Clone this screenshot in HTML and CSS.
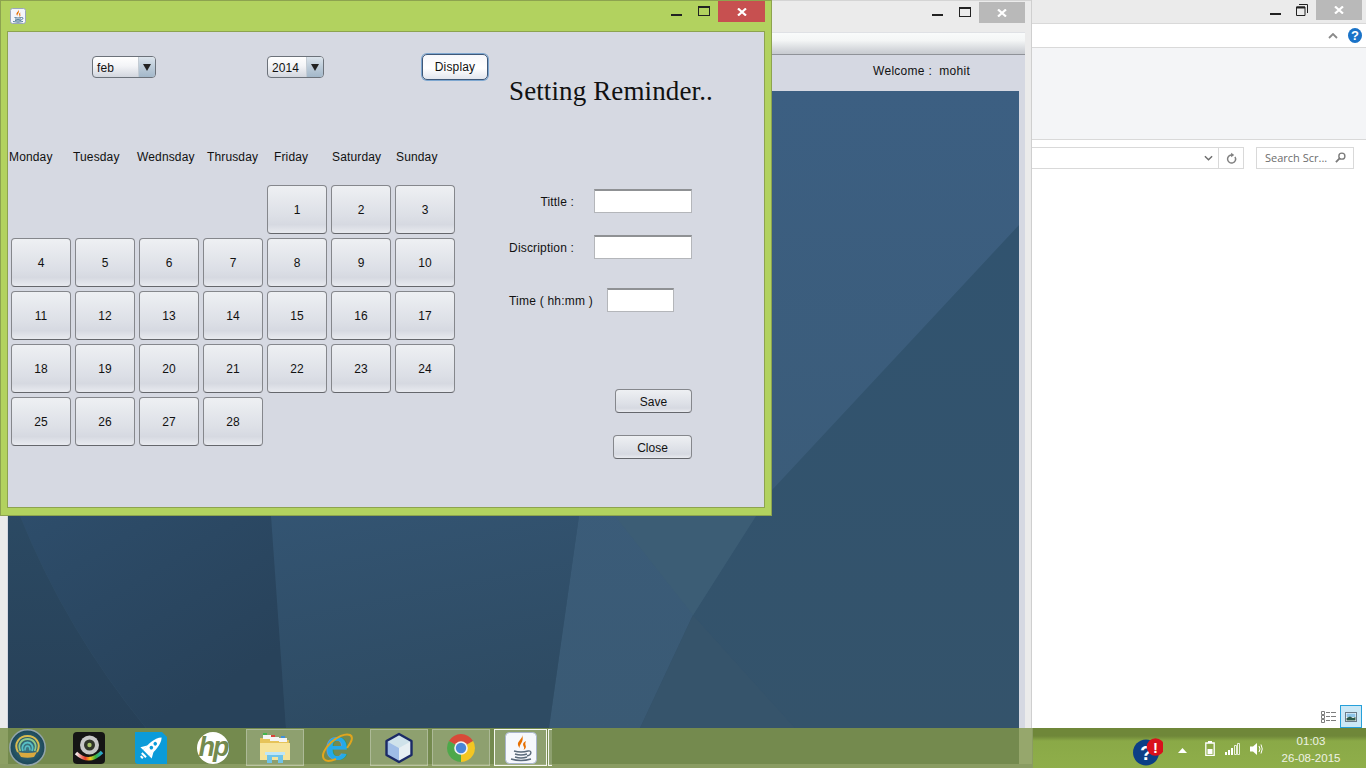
FILE: index.html
```html
<!DOCTYPE html>
<html lang="en">
<head>
<meta charset="utf-8">
<title>Setting Reminder</title>
<link rel="stylesheet" href="styles.css">
</head>
<body>
<div class="screen">
  <main class="stage">
    <section class="win-explorer">
      <div class="ex-title">
        <span class="ctl-min"></span>
        <svg class="ex-restore" viewBox="0 0 12 12"><path d="M3 .5h8.500v8.500M.5 3h8.500v8.500H.5z" fill="none" stroke="#222"/><path d="M.5 3.500H9" stroke="#222" stroke-width="2"/></svg>
        <span class="ctl-close gray ex-close"><svg class="x" viewBox="0 0 10 8"><path d="M1 .5l8 7M9 .5l-8 7" stroke="#fff" stroke-width="2.2"/></svg></span>
      </div>
      <div class="ex-tabs">
        <svg class="ex-chev" viewBox="0 0 10 6"><path d="M1 5l4-4 4 4" fill="none" stroke="#8a8a8a" stroke-width="1.8"/></svg>
        <span class="ex-help">?</span>
      </div>
      <div class="ex-ribbon"></div>
      <div class="ex-nav">
        <div class="ex-addr">
          <svg class="ex-down" viewBox="0 0 10 6"><path d="M1 1l4 4 4-4" fill="none" stroke="#6d6d6d" stroke-width="1.6"/></svg>
          <span class="ex-refresh"><svg viewBox="0 0 12 14"><path d="M9.800 5.200a4.400 4.400 0 1 1-2.600-1.900" fill="none" stroke="#808080" stroke-width="1.6"/><path d="M5.600 .6l3.400 2.600-3.400 2.400z" fill="#808080"/></svg></span>
        </div>
        <div class="ex-search">
          <span>Search Scr...</span>
          <svg viewBox="0 0 12 12"><circle cx="7.500" cy="4.500" r="3.300" fill="none" stroke="#7a7a7a" stroke-width="1.5"/><path d="M5 7l-4 4" stroke="#7a7a7a" stroke-width="2"/></svg>
        </div>
      </div>
      <div class="ex-foot">
        <svg class="ex-details" viewBox="0 0 15 12"><path d="M.5.5h3v3h-3zM.5 4.500h3v3h-3zM.5 8.500h3v3h-3z" fill="#fff" stroke="#7d7d7d"/><path d="M5 1.500h4M10 1.500h5M5 5.500h4M10 5.500h5M5 9.500h4M10 9.500h5" stroke="#7d7d7d"/></svg>
        <span class="ex-large"><svg viewBox="0 0 12 10"><rect x=".5" y=".5" width="11" height="9" fill="#fff" stroke="#6a7a88"/><rect x="1.500" y="1.500" width="9" height="3.500" fill="#8ec5e8"/><path d="M1.500 8.500V6L5 4.500 8 6l2.500-1v3.500z" fill="#2c5a4a"/></svg></span>
      </div>
    </section>

    <section class="win-mid">
      <div class="mid-title">
        <span class="ctl-min"></span>
        <span class="ctl-max"></span>
        <span class="ctl-close gray"><svg class="x" viewBox="0 0 10 8"><path d="M1 .5l8 7M9 .5l-8 7" stroke="#fff" stroke-width="2.2"/></svg></span>
      </div>
      <div class="mid-inner">
        <div class="mid-toolbar"></div>
        <div class="mid-welcome">Welcome :&nbsp; mohit</div>
        <svg class="scene" viewBox="8 91 1011 637" preserveAspectRatio="none">
          <defs>
            <linearGradient id="gTop" x1="0" y1="0" x2="0" y2="1"><stop offset="0" stop-color="#3c5f82"/><stop offset="1" stop-color="#3a5a74"/></linearGradient>
            <linearGradient id="gRight" x1="0" y1="0" x2="0" y2="1"><stop offset="0" stop-color="#305370"/><stop offset="1" stop-color="#34536b"/></linearGradient>
            <linearGradient id="gA" x1="0" y1="0" x2=".5" y2="1"><stop offset="0" stop-color="#305272"/><stop offset="1" stop-color="#28425a"/></linearGradient>
            <linearGradient id="gB" x1="0" y1="0" x2=".2" y2="1"><stop offset="0" stop-color="#36597a"/><stop offset="1" stop-color="#2e4b63"/></linearGradient>
            <linearGradient id="gL" x1="0" y1="0" x2="0" y2="1"><stop offset="0" stop-color="#2c4b65"/><stop offset="1" stop-color="#274057"/></linearGradient>
          </defs>
          <rect x="8" y="91" width="1011" height="637" fill="url(#gRight)"/>
          <path d="M560 91H1019V225L772 490 693 615 640 728H549L579 516Z" fill="url(#gTop)"/>
          <path d="M693 615L795 728H640Z" fill="#36546b"/>
          <path d="M615 516H756L693 615Z" fill="#3c5d75"/>
          <path d="M260 400L271 516 286 728H549L579 516 590 400Z" fill="url(#gB)"/>
          <path d="M8 400H260L271 516 286 728H146Q66 630 20 516Z" fill="url(#gA)"/>
          <path d="M8 480L20 516Q66 630 146 728H8Z" fill="url(#gL)"/>
        </svg>
      </div>
    </section>

    <section class="win-java">
      <header class="java-title">
        <svg class="java-icon" viewBox="0 0 32 32">
          <rect x="1" y="1" width="30" height="30" rx="4" fill="#f4f6fb" stroke="#9aa6bd" stroke-width="2"/>
          <path d="M17 3c1 4-5 6-4 10 .4 1.500 1.500 2.500 2 3-2-3 5-6 2-13z" fill="#e76f00"/>
          <path d="M21 9c-4 2-3 4-2 6 .4 1 0 2-.5 3 2-1 3-3 2-5-.5-1 0-3 .5-4z" fill="#e76f00"/>
          <path d="M9 19q7 2 14 0M10 22q6 2 12 0M10 25q6 2 12 0M23 19c4-1 4 4-1 5M6 27q10 3 20 0" fill="none" stroke="#42708f" stroke-width="1.800"/>
        </svg>
        <span class="ctl-min"></span>
        <span class="ctl-max"></span>
        <span class="ctl-close red"><svg class="x" viewBox="0 0 10 8"><path d="M1 .5l8 7M9 .5l-8 7" stroke="#fff" stroke-width="2.2"/></svg></span>
      </header>
      <div class="java-panel">
        <div class="cal-col">
          <div class="controls">
            <div class="combo combo-month"><span class="combo-text">feb</span><span class="combo-arrow"></span></div>
            <div class="combo combo-year"><span class="combo-text">2014</span><span class="combo-arrow"></span></div>
            <button class="btn btn-display" type="button">Display</button>
          </div>
          <div class="weekdays">
            <span>Monday</span><span>Tuesday</span><span>Wednsday</span><span>Thrusday</span><span>Friday</span><span>Saturday</span><span>Sunday</span>
          </div>
          <div class="days">
            <button class="btn day first" type="button">1</button>
            <button class="btn day" type="button">2</button>
            <button class="btn day" type="button">3</button>
            <button class="btn day" type="button">4</button>
            <button class="btn day" type="button">5</button>
            <button class="btn day" type="button">6</button>
            <button class="btn day" type="button">7</button>
            <button class="btn day" type="button">8</button>
            <button class="btn day" type="button">9</button>
            <button class="btn day" type="button">10</button>
            <button class="btn day" type="button">11</button>
            <button class="btn day" type="button">12</button>
            <button class="btn day" type="button">13</button>
            <button class="btn day" type="button">14</button>
            <button class="btn day" type="button">15</button>
            <button class="btn day" type="button">16</button>
            <button class="btn day" type="button">17</button>
            <button class="btn day" type="button">18</button>
            <button class="btn day" type="button">19</button>
            <button class="btn day" type="button">20</button>
            <button class="btn day" type="button">21</button>
            <button class="btn day" type="button">22</button>
            <button class="btn day" type="button">23</button>
            <button class="btn day" type="button">24</button>
            <button class="btn day" type="button">25</button>
            <button class="btn day" type="button">26</button>
            <button class="btn day" type="button">27</button>
            <button class="btn day" type="button">28</button>
          </div>
        </div>
        <div class="form-col">
          <h1 class="heading">Setting Reminder..</h1>
          <div class="row row-title"><label>Tittle :</label><input class="field" type="text"></div>
          <div class="row row-desc"><label>Discription :</label><input class="field" type="text"></div>
          <div class="row row-time"><label>Time ( hh:mm )</label><input class="field field-time" type="text"></div>
          <div class="actions">
            <button class="btn btn-save" type="button">Save</button>
            <button class="btn btn-close" type="button">Close</button>
          </div>
        </div>
      </div>
    </section>
  </main>

  <footer class="taskbar">
    <svg class="start" viewBox="0 0 37 37">
      <defs><radialGradient id="gStart"><stop offset="0" stop-color="#3f7a86"/><stop offset="1" stop-color="#1c4658"/></radialGradient></defs>
      <circle cx="18.500" cy="18.500" r="17.700" fill="url(#gStart)" stroke="#93a5ab" stroke-width="1.500"/>
      <path d="M9 23C4 14 11 7 18.500 7S33 14 28 23" fill="none" stroke="#d9bb4f" stroke-width="2"/>
      <path d="M11.500 22C8 15 13 10 18.500 10S29 15 25.500 22" fill="none" stroke="#8fc98a" stroke-width="1.800"/>
      <path d="M14 22C12 17 15 13.500 18.500 13.500S25 17 23 22" fill="none" stroke="#58c0c6" stroke-width="1.800"/>
      <path d="M16 21.500c0-2.500 1-4.500 2.500-4.500s2.500 2 2.500 4.500" fill="none" stroke="#58c0c6" stroke-width="1.500"/>
      <path d="M9 23q9.500 2 19 0l-3 5q-6.500 1.500-13 0z" fill="#d9a93f"/>
    </svg>
    <span class="task">
      <svg class="ico" viewBox="0 0 32 32">
        <defs><linearGradient id="gRain"><stop offset="0" stop-color="#f3f3f3"/><stop offset=".35" stop-color="#e8392b"/><stop offset=".55" stop-color="#f2c81e"/><stop offset=".75" stop-color="#3cb53c"/><stop offset="1" stop-color="#2aa7d8"/></linearGradient></defs>
        <rect width="32" height="32" rx="4" fill="#151515"/>
        <circle cx="16.500" cy="13" r="9.500" fill="#c8c8c8"/>
        <circle cx="16.500" cy="13" r="5.500" fill="#30352a"/>
        <circle cx="16.500" cy="13" r="2.200" fill="#a9c46a"/>
        <path d="M3 21q13 12 26-1" fill="none" stroke="url(#gRain)" stroke-width="3.500"/>
      </svg>
    </span>
    <span class="task">
      <svg class="ico" viewBox="0 0 32 32">
        <path d="M0 0H27L32 5V32H3Q0 32 0 29Z" fill="#0b9bd9"/>
        <g transform="rotate(45 16 16)">
          <path d="M16 1C21 6 21 17 20 23H12C11 17 11 6 16 1Z" fill="#fff"/>
          <path d="M12 16L8 23H12ZM20 16L24 23H20Z" fill="#fff"/>
          <circle cx="16" cy="10" r="1.800" fill="#0b9bd9"/>
          <circle cx="16" cy="15.500" r="1.800" fill="#0b9bd9"/>
          <path d="M13 25h6v2h-6zM14.500 28h3v2h-3z" fill="#fff"/>
        </g>
      </svg>
    </span>
    <span class="task"><span class="hp">hp</span></span>
    <span class="task on">
      <svg class="ico" viewBox="0 0 32 32">
        <path d="M1 6h10l2 2h17v20H1z" fill="#e6c35a"/>
        <path d="M4 3h8v4H4z" fill="#f4f4f4"/><path d="M4 1h4v2H4z" fill="#3fb54a"/>
        <path d="M11 5h9v4h-9z" fill="#f4f4f4"/><path d="M12 3h4v2h-4z" fill="#d9433a"/>
        <path d="M20 6h8v4h-8z" fill="#f4f4f4"/><path d="M22 4h4v2h-4z" fill="#3f8fd9"/>
        <path d="M1 11h30v17H1z" fill="#f6e39a"/>
        <path d="M6 20h20v3h-2v8h-5v-6h-6v6H8v-8H6z" fill="#6fc3e8"/>
        <path d="M6 20h20v3H6z" fill="#bfe6f6"/>
      </svg>
    </span>
    <span class="task">
      <span class="ie">e
        <svg class="ie-orbit" viewBox="0 0 38 38">
          <path d="M6 30C0 22 22 2 32 6c4 2 1 8-3 13M6 30c2 3 7 2 12 0" fill="none" stroke="#e0a51e" stroke-width="2"/>
        </svg>
      </span>
    </span>
    <span class="task on">
      <svg class="ico" viewBox="0 0 32 32">
        <path d="M16 2L28.500 9V23L16 30 3.500 23V9Z" fill="#e7eff3"/>
        <path d="M16 2L28.500 9 16 16 3.500 9Z" fill="#cfe2ea"/>
        <path d="M3.500 9L16 16V30L3.500 23Z" fill="#9fbde6"/>
        <path d="M16 2L28.500 9V23L16 30 3.500 23V9Z" fill="none" stroke="#1b2a66" stroke-width="2.400" stroke-linejoin="round"/>
      </svg>
    </span>
    <span class="task on">
      <svg class="ico" viewBox="0 0 32 32">
        <path d="M16 16L3.900 9A14 14 0 0 1 28.100 9Z" fill="#d94a38"/>
        <path d="M16 16L28.100 9A14 14 0 0 1 16 30Z" fill="#f4c622"/>
        <path d="M16 16L16 30A14 14 0 0 1 3.900 9Z" fill="#4ea84a"/>
        <circle cx="16" cy="16" r="6.800" fill="#f2f2f2"/>
        <circle cx="16" cy="16" r="5.200" fill="#4a85d8"/>
      </svg>
    </span>
    <span class="task on active">
      <svg class="ico" viewBox="0 0 32 32">
        <rect x=".5" y=".5" width="31" height="31" rx="4" fill="#f6f8fc" stroke="#a9b4cc"/>
        <path d="M17 3c1 4-5 6-4 10 .4 1.500 1.500 2.500 2 3-2-3 5-6 2-13z" fill="#e76f00"/>
        <path d="M21 9c-4 2-3 4-2 6 .4 1 0 2-.5 3 2-1 3-3 2-5-.5-1 0-3 .5-4z" fill="#e76f00"/>
        <path d="M9 19q7 2 14 0M10 22q6 2 12 0M10 25q6 2 12 0M23 19c4-1 4 4-1 5M6 27q10 3 20 0" fill="none" stroke="#5a6a7a" stroke-width="1.400"/>
      </svg>
    </span>
    <span class="task-sliver"></span>
    <div class="tray">
      <svg class="tray-help" viewBox="0 0 30 28">
        <circle cx="13" cy="14.500" r="13" fill="#0b3f86"/>
        <text class="help-q" x="13" y="22" text-anchor="middle">?</text>
        <circle cx="22.500" cy="9" r="8.800" fill="#d9101c"/>
        <text class="help-e" x="22.500" y="14.500" text-anchor="middle">!</text>
      </svg>
      <svg class="tray-up" viewBox="0 0 9 5"><path d="M4.500 0L9 5H0z" fill="#fff"/></svg>
      <svg class="tray-bat" viewBox="0 0 10 15"><path d="M3 .5h4M.8 2h8.400v12.500H.8z" fill="none" stroke="#fff" stroke-width="1.300"/><rect x="2.500" y="8" width="5" height="5" fill="#fff"/></svg>
      <svg class="tray-sig" viewBox="0 0 15 12"><path d="M0 9h2v3H0zM3 7h2v5H3zM6 5h2v7H6z" fill="#fff"/><path d="M9.500 2.500h2v9h-2zM12.500.5h2v11h-2z" fill="none" stroke="#fff" stroke-width=".8"/></svg>
      <svg class="tray-vol" viewBox="0 0 13 14"><path d="M0 4.500h3L7 1v12L3 9.500H0z" fill="#fff"/><path d="M9 4q2 3 0 6M11 2.500q2.500 4.500 0 9" fill="none" stroke="#fff"/></svg>
      <div class="clock"><span>01:03</span><span>26-08-2015</span></div>
    </div>
  </footer>
</div>
</body>
</html>
```

FILE: styles.css
```css
* { box-sizing: border-box; }
html, body { margin: 0; padding: 0; }
body { width: 1366px; height: 768px; overflow: hidden; font-family: "Liberation Sans", Arial, sans-serif; font-size: 12px; color: #111; background: #fff; }

.screen { width: 1366px; height: 768px; display: flex; flex-direction: column; }
.stage { position: relative; height: 728px; }

/* window controls */
.ctl-min { width: 11px; height: 2px; background: #222; margin-top: 13px; flex: none; }
.ctl-max { width: 12px; height: 10px; border: 1px solid #222; border-top-width: 2px; margin-top: 5px; margin-left: 16px; flex: none; }
.ctl-close { height: 21px; width: 46px; margin-left: 8px; display: flex; align-items: center; justify-content: center; flex: none; }
.ctl-close.gray { background: #b9b9b9; }
.ctl-close.red { background: #c75050; width: 47px; }
.x { width: 10px; height: 8px; display: block; }

/* explorer behind */
.win-explorer { position: absolute; left: 1032px; top: 0; width: 334px; height: 728px; background: #fff; display: flex; flex-direction: column; }
.ex-title { height: 24px; flex: none; background: #ebebeb; border-bottom: 1px solid #d9d9d9; display: flex; justify-content: flex-end; padding-right: 4px; }
.ex-title .ctl-min { margin-top: 13px; height: 2px; }
.ex-restore { width: 12px; height: 12px; margin: 4px 0 0 15px; flex: none; }
.ex-close { margin-left: 8px; height: 20px; width: 46px; }
.ex-tabs { height: 24px; flex: none; display: flex; align-items: center; justify-content: flex-end; padding-right: 4px; background: #fff; border-bottom: 1px solid #d9d9d9; }
.ex-chev { width: 10px; height: 6px; margin-right: 10px; }
.ex-help { width: 14px; height: 15px; border-radius: 50%; background: #1a73c8; color: #fff; font-weight: bold; font-size: 13px; line-height: 15px; text-align: center; }
.ex-ribbon { height: 92px; flex: none; background: #f4f5f7; border-bottom: 1px solid #d9d9d9; }
.ex-nav { margin-top: 7px; height: 22px; flex: none; display: flex; gap: 12px; }
.ex-addr { width: 212px; border: 1px solid #d9d9d9; border-left: 0; display: flex; align-items: center; justify-content: flex-end; }
.ex-down { width: 9px; height: 6px; margin-right: 5px; }
.ex-refresh { width: 25px; height: 100%; border-left: 1px solid #d9d9d9; display: flex; align-items: center; justify-content: center; }
.ex-refresh svg { width: 11px; height: 13px; }
.ex-search { width: 98px; border: 1px solid #d9d9d9; display: flex; align-items: center; justify-content: space-between; padding: 0 7px 2px 8px; color: #6d6d6d; font-family: "Open Sans", sans-serif; font-size: 11px; }
.ex-search svg { width: 11px; height: 11px; }
.ex-foot { margin-top: auto; display: flex; justify-content: flex-end; align-items: center; padding-right: 4px; }
.ex-details { width: 15px; height: 12px; margin-right: 4px; }
.ex-large { width: 22px; height: 23px; background: #cbe8f6; border: 1px solid #26a0da; display: flex; align-items: center; justify-content: center; }
.ex-large svg { width: 12px; height: 10px; }

/* middle window */
.win-mid { position: absolute; left: 0; top: 0; width: 1032px; height: 728px; background: #ebebeb; border-right: 1px solid #cfcfcf; padding: 0 6px 0 7px; display: flex; flex-direction: column; }
.mid-title { height: 32px; flex: none; display: flex; justify-content: flex-end; padding-top: 1px; border-top: 1px solid #d4d4d4; margin-right: -6px; padding-right: 6px; }
.mid-title .ctl-min { margin-top: 12px; }
.mid-title .ctl-close { height: 21px; }
.mid-inner { flex: 1; min-height: 0; background: #d5d8e2; display: flex; flex-direction: column; }
.mid-toolbar { height: 23px; flex: none; background: linear-gradient(#f9fbfb 0, #f4f6f6 35%, #d0d3d8 85%, #c8cbd0 100%); border: 1px solid #dfe1e5; border-bottom: 1px solid #8f9298; border-right: 0; }
.mid-welcome { height: 36px; flex: none; text-align: right; padding: 9px 55px 0 0; line-height: 14px; letter-spacing: .28px; }
.scene { flex: 1; min-height: 0; width: 1011px; margin-left: 1px; display: block; }

/* java window */
.win-java { position: absolute; left: 0; top: 0; width: 772px; height: 516px; background: #b2d25f; border: 1px solid #8da34f; padding: 0 6px 7px; display: flex; flex-direction: column; }
.java-title { height: 30px; flex: none; display: flex; }
.java-icon { width: 16px; height: 16px; margin: 7px auto 0 3px; flex: none; }
.java-title .ctl-min { margin-top: 13px; }
.java-panel { flex: 1; min-height: 0; background: #d6d9e2; border: 1px solid #8da34f; display: flex; }

.btn { font: 12px "Liberation Sans", Arial, sans-serif; color: #111; padding: 0; border: 1px solid #85878c; border-bottom-color: #65676c; border-radius: 4px; background: linear-gradient(#eef0f3 0, #dcdfe6 65%, #d6d9e1 82%, #e8eaef 100%); }

.cal-col { width: 491px; flex: none; }
.controls { margin-top: 22px; height: 26px; display: flex; align-items: center; padding-left: 84px; }
.combo { height: 22px; display: flex; border: 1px solid #6c727a; border-radius: 4px; overflow: hidden; background: linear-gradient(#fff 0, #f3f4f7 45%, #d2d6de 100%); }
.combo-month { width: 64px; }
.combo-year { width: 57px; margin-left: 111px; }
.combo-text { flex: 1; padding: 1px 0 0 4px; line-height: 20px; letter-spacing: .1px; }
.combo-arrow { width: 17px; flex: none; display: flex; align-items: center; justify-content: center; background: linear-gradient(#dce4ec 0, #bccbd9 50%, #a3b8ca 100%); border-left: 1px solid #c4ccd4; }
.combo-arrow::after { content: ""; border: 4px solid transparent; border-top: 7px solid #222; border-bottom: 0; }
.btn-display { width: 66px; height: 26px; margin-left: 98px; border: 1px solid #3f5878; border-radius: 5px; background: linear-gradient(#f7f8fb 0, #fff 55%, #e2e6ee 100%); box-shadow: 0 0 0 1px #7ea7d0; letter-spacing: .15px; }

.weekdays { margin-top: 70px; padding-left: 1px; display: grid; grid-template-columns: 64px 64px 70px 67px 58px 64px auto; line-height: 14px; letter-spacing: .14px; }
.days { margin: 21px 0 0 3px; display: grid; grid-template-columns: repeat(7, 60px); grid-auto-rows: 49px; gap: 4px; }
.first { grid-column-start: 5; }

.form-col { flex: 1; padding-left: 10px; }
.heading { margin: 44px 0 0; height: 30px; line-height: 30px; font-family: "Liberation Serif", serif; font-weight: normal; font-size: 27px; letter-spacing: .12px; color: #111; white-space: nowrap; }
.row { display: flex; align-items: center; height: 24px; }
.row label { width: 65px; padding-top: 2px; text-align: right; flex: none; white-space: nowrap; letter-spacing: .17px; }
.row-title { margin-top: 83px; }
.row-desc { margin-top: 22px; }
.row-time { margin-top: 29px; }
.row-time label { width: 84px; text-align: left; letter-spacing: .22px; }
.field { width: 98px; height: 24px; margin-left: 20px; padding: 0; background: #fff; border: 1px solid #b4b6ba; border-top: 2px solid #8f9194; border-radius: 0; flex: none; }
.field-time { width: 67px; margin-left: 14px; }
.actions { width: 183px; margin-top: 77px; display: flex; flex-direction: column; align-items: flex-end; gap: 22px; }
.btn-save { width: 77px; height: 24px; padding-top: 2px; }
.btn-close { width: 79px; height: 24px; padding-top: 2px; }

/* taskbar */
.taskbar { height: 40px; flex: none; display: flex; align-items: flex-start; padding: 1px 0 0 9px; gap: 4px;
  background:
    linear-gradient(#8a9c62, #8a9c62) 0 100% / 1032px 4px no-repeat,
    linear-gradient(90deg, #8da064 0 8px, #748a4e 8px 1019px, #96a76c 1019px 1032px, #8a9c62 1032px 1033px, transparent 1033px),
    linear-gradient(#6f8739 0, #6f8739 8px, #8aa947 13px, #8fae4a 100%); }
.start { width: 37px; height: 37px; flex: none; margin-right: 10px; }
.task { width: 58px; height: 37px; flex: none; display: flex; align-items: center; justify-content: center; border: 1px solid transparent; }
.task.on { background: rgba(255,255,255,.19); border-color: rgba(255,255,255,.28); }
.task.active { width: 53px; border-color: #f4f6ee; }
.task-sliver { width: 4px; height: 37px; margin-left: -3px; background: rgba(255,255,255,.19); border: 1px solid #f4f6ee; border-right: 0; flex: none; }
.ico { width: 32px; height: 32px; display: block; }
.hp { width: 32px; height: 32px; border-radius: 50%; background: #fff; color: #748a4e; font: italic bold 27px/30px "Liberation Sans", sans-serif; text-align: center; letter-spacing: -2px; }
.ie { position: relative; width: 32px; height: 32px; display: block; text-align: center; color: #25a9e8; font: bold 42px/28px "Liberation Sans", sans-serif; }
.ie-orbit { position: absolute; left: -3px; top: -3px; width: 38px; height: 38px; }
.help-q { font: bold 20px "Liberation Sans", sans-serif; fill: #fff; }
.help-e { font: bold 15px "Liberation Sans", sans-serif; fill: #fff; }

.tray { margin-left: auto; display: flex; align-items: flex-start; padding-right: 26px; }
.tray-help { width: 30px; height: 28px; margin-top: 9px; flex: none; }
.tray-up { width: 9px; height: 5px; margin: 19px 0 0 15px; flex: none; }
.tray-bat { width: 10px; height: 15px; margin: 12px 0 0 18px; flex: none; }
.tray-sig { width: 15px; height: 12px; margin: 14px 0 0 10px; flex: none; }
.tray-vol { width: 13px; height: 14px; margin: 13px 0 0 10px; flex: none; }
.clock { width: 58px; margin: 4px 0 0 19px; display: flex; flex-direction: column; align-items: center; color: #eef2e4; font-size: 11.5px; line-height: 17px; white-space: nowrap; }
```
